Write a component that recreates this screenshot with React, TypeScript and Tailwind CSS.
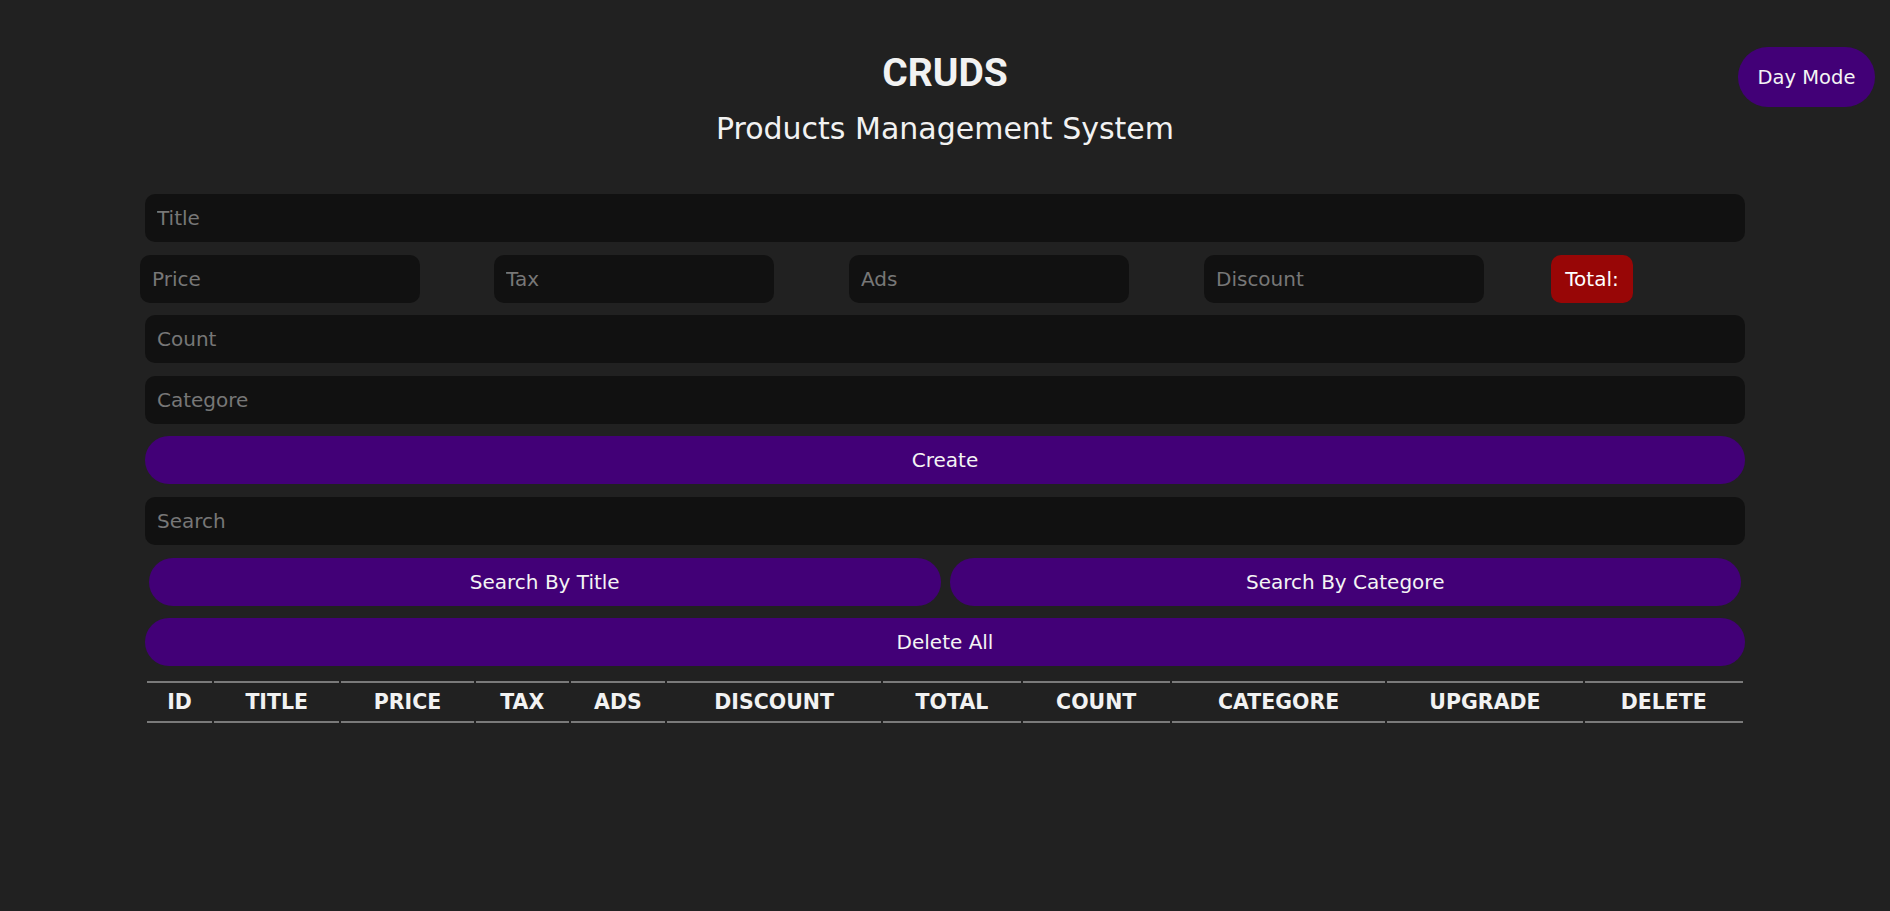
import { useState } from 'react';

const columns = [
  { label: 'id', w: 'w-[65px]' },
  { label: 'title', w: 'w-[125px]' },
  { label: 'price', w: 'w-[132px]' },
  { label: 'tax', w: 'w-[93px]' },
  { label: 'ads', w: 'w-[94px]' },
  { label: 'discount', w: 'w-[214px]' },
  { label: 'total', w: 'w-[137px]' },
  { label: 'count', w: 'w-[147px]' },
  { label: 'categore', w: 'w-[213px]' },
  { label: 'upgrade', w: 'w-[195px]' },
  { label: 'delete', w: 'w-[158px]' },
];

const field = 'h-12 w-full rounded-[10px] bg-[#111111] px-3 text-[20px] text-white outline-none placeholder:text-[#777777]';
const btn = 'h-12 w-full rounded-full bg-[#420077] text-[20px] text-[#f4f4f4]';

export default function App() {
  const [dark, setDark] = useState(true);

  return (
    <main className="relative min-h-[911px] bg-[#212121] pt-[51px] font-['DejaVu_Sans',sans-serif] text-[#f2f2f2]">
      <button
        className="absolute right-[15px] top-[47px] h-[60px] w-[137px] rounded-full bg-[#420077] pt-px text-[19.5px] text-[#f4f4f4]"
        onClick={() => setDark(!dark)}
      >
        Day Mode
      </button>

      <header className="flex flex-col items-center">
        <h1 className="h-[44px] font-['Roboto',sans-serif] text-[39px] font-bold leading-[44px]">CRUDS</h1>
        <h2 className="mt-[16px] text-[30px] leading-[35px]">Products Management System</h2>
      </header>

      <section className="mx-auto mt-[48px] flex w-[1600px] flex-col gap-[12.6px]">
        <input className={field} placeholder="Title" />
        <div className="-ml-[5px] flex items-center">
          <input className={`${field} !w-[280px]`} placeholder="Price" />
          <input className={`${field} ml-[74px] !w-[280px]`} placeholder="Tax" />
          <input className={`${field} ml-[75px] !w-[280px]`} placeholder="Ads" />
          <input className={`${field} ml-[75px] !w-[280px]`} placeholder="Discount" />
          <span className="ml-[67px] flex h-12 w-[82px] items-center justify-center rounded-[10px] bg-[#980606] text-[20px] text-white">Total:</span>
        </div>
        <input className={field} placeholder="Count" />
        <input className={field} placeholder="Categore" />
        <button className={btn}>Create</button>
        <input className={field} placeholder="Search" />
        <div className="flex gap-[9px] px-[4px]">
          <button className={btn}>Search By Title</button>
          <button className={btn}>Search By Categore</button>
        </div>
        <button className={btn}>Delete All</button>

        <table className="w-full table-fixed border-separate border-spacing-[2px] text-center">
          <thead>
            <tr>
              {columns.map((c) => (
                <th key={c.label} className={`${c.w} h-[42px] border-y-2 border-[#7a7a7a] p-0 pt-[2px] text-[20.5px] font-bold uppercase`}>
                  {c.label}
                </th>
              ))}
            </tr>
          </thead>
          <tbody />
        </table>
      </section>
    </main>
  );
}
